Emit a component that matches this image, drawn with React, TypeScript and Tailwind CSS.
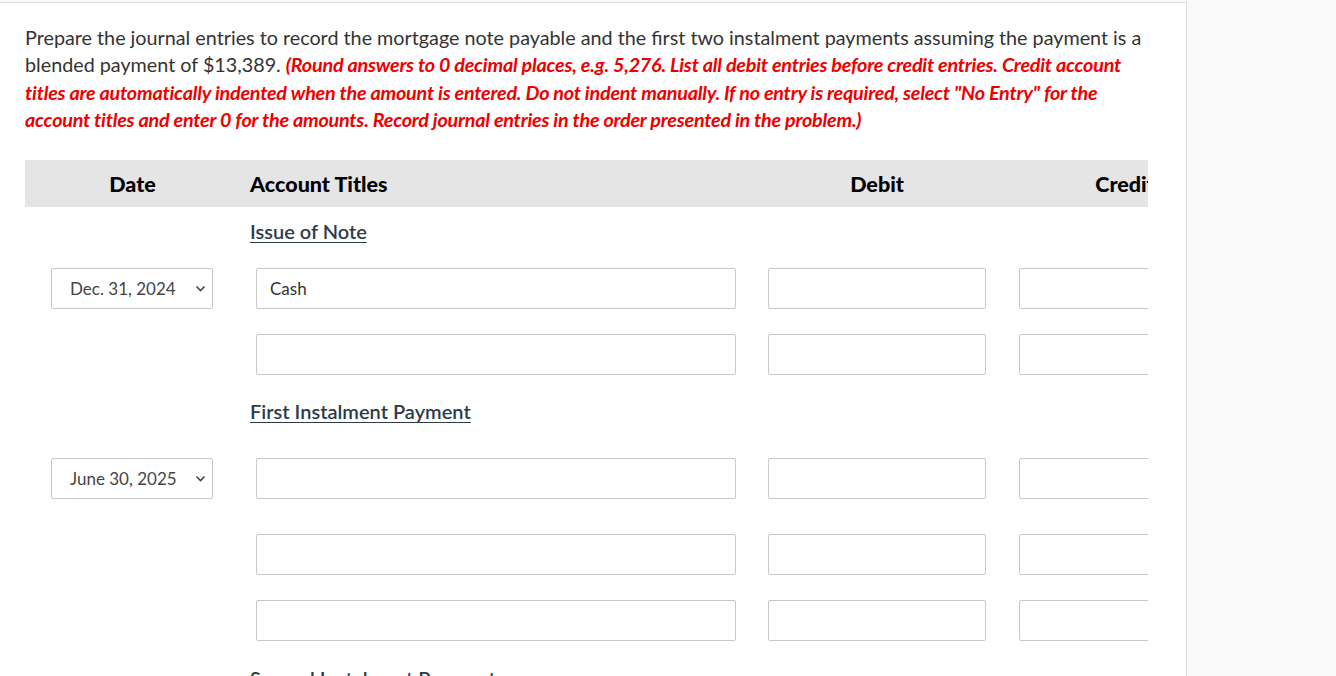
import React from "react";

const font = { fontFamily: "Lato, 'Open Sans', sans-serif" };

function DateSelect({ value }: { value: string }) {
  return (
    <div className="relative ml-[26px] h-[41px] w-[162px] rounded-[2px] border border-[#c8c8c8] bg-white">
      <span className="absolute left-[18px] top-[8px] text-[17px] leading-[24px] text-[#444]">{value}</span>
      <svg className="absolute left-[143px] top-[16px]" width="11" height="8" viewBox="0 0 11 8">
        <path d="M1.5 1.5 L5.5 5.5 L9.5 1.5" fill="none" stroke="#444" strokeWidth="1.6" />
      </svg>
    </div>
  );
}

function Box({ w, ml, text }: { w: number; ml: number; text?: string }) {
  return (
    <div
      className="h-[41px] rounded-[2px] border border-[#c8c8c8] bg-white"
      style={{ width: w, marginLeft: ml }}
    >
      {text ? (
        <span className="ml-[13px] mt-[8px] block text-[17px] leading-[24px] text-[#333]">{text}</span>
      ) : null}
    </div>
  );
}

function Row({ date, account, mt }: { date?: string; account?: string; mt: number }) {
  return (
    <div className="flex" style={{ marginTop: mt }}>
      <div className="w-[215px] shrink-0">{date ? <DateSelect value={date} /> : null}</div>
      <div className="w-[512px] shrink-0">
        <Box w={480} ml={16} text={account} />
      </div>
      <div className="w-[250px] shrink-0">
        <Box w={218} ml={16} />
      </div>
      <div className="w-[246px] shrink-0">
        <Box w={212} ml={17} />
      </div>
    </div>
  );
}

function Label({ text, mt }: { text: string; mt: number }) {
  return (
    <div className="flex" style={{ marginTop: mt }}>
      <div className="w-[225px] shrink-0" />
      <div className="text-[20px] font-semibold leading-[27px] text-[#2d3b48] underline decoration-1 underline-offset-[3px]">
        {text}
      </div>
    </div>
  );
}

export default function App() {
  return (
    <div className="flex h-[676px] w-[1336px] overflow-hidden bg-[#f9f9f9]" style={font}>
      <div className="mt-[2px] h-[674px] w-[1187px] shrink-0 overflow-hidden border-r border-t border-[#dcdcdc] bg-white">
        <p className="ml-[25px] mt-[21px] w-[1128px] text-[19.75px] leading-[27.3px] text-[#333]">
          Prepare the journal entries to record the mortgage note payable and the first two instalment payments
          assuming the payment is a blended payment of $13,389.{" "}
          <span className="font-bold italic tracking-[-0.22px] text-[#ee0000]">
            (Round answers to 0 decimal places, e.g. 5,276. List all debit entries before credit entries. Credit
            account titles are automatically indented when the amount is entered. Do not indent manually. If no entry
            is required, select "No Entry" for the account titles and enter 0 for the amounts. Record journal entries
            in the order presented in the problem.)
          </span>
        </p>
        <div className="ml-[25px] mt-[27px] w-[1123px] overflow-hidden">
          <div className="flex h-[47px] w-[1223px] items-center bg-[#e5e5e5] text-[21.5px] font-black text-black">
            <div className="w-[215px] shrink-0 text-center">Date</div>
            <div className="w-[512px] shrink-0 pl-[10px]">Account Titles</div>
            <div className="w-[250px] shrink-0 text-center">Debit</div>
            <div className="w-[246px] shrink-0 text-center">Credit</div>
          </div>
          <div className="w-[1223px]">
            <Label text="Issue of Note" mt={11} />
            <Row date="Dec. 31, 2024" account="Cash" mt={23} />
            <Row mt={25} />
            <Label text="First Instalment Payment" mt={23} />
            <Row date="June 30, 2025" mt={33} />
            <Row mt={35} />
            <Row mt={25} />
            <Label text="Second Instalment Payment" mt={24} />
          </div>
        </div>
      </div>
      <div className="flex-1" />
    </div>
  );
}
